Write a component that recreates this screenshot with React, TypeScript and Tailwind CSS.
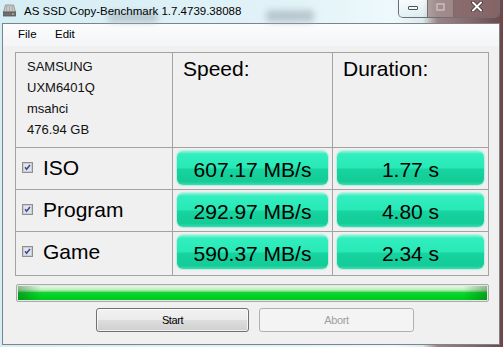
import React from "react";

const sans = { fontFamily: '"Liberation Sans", Arial, sans-serif' };

function Check() {
  return (
    <svg width="11" height="11" viewBox="0 0 11 11">
      <rect x="0.5" y="0.5" width="10" height="10" fill="#f4f4f4" stroke="#8e8f8f" />
      <rect x="1.5" y="1.5" width="8" height="8" fill="#e2e4e8" stroke="#c9ccd2" />
      <path d="M3 5.3 L4.6 7.2 L8 3" fill="none" stroke="#3d4f94" strokeWidth="1.6" />
    </svg>
  );
}

function DriveIcon() {
  return (
    <svg width="13" height="13" viewBox="0 0 13 13">
      <path d="M2.5 1 L10.5 1 L12.5 8 L0.5 8 Z" fill="#c9c9c9" stroke="#8a8a8a" strokeWidth="0.8" />
      <path d="M4 2 L3.3 7.5 M6.5 2 L6.5 7.5 M9 2 L9.7 7.5" stroke="#a5a5a5" strokeWidth="0.8" />
      <rect x="0.5" y="8" width="12" height="4" fill="#6e6e6e" stroke="#555" strokeWidth="0.8" />
      <rect x="9" y="9.5" width="2" height="1" fill="#c8c8c8" />
    </svg>
  );
}

function GreenBox({ text }: { text: string }) {
  return (
    <div className="h-[34px] w-full rounded-[6px] shadow-[0_0_1px_1px_rgba(120,230,200,0.45)] bg-[linear-gradient(to_bottom,#8af7dc_0%,#33eebf_9%,#27e9b6_50%,#17d39f_53%,#13cc98_90%,#3fdcb2_100%)] flex items-center justify-center pt-[2px] text-[21px] text-black leading-none">
      {text}
    </div>
  );
}

function LabelCell({ label }: { label: string }) {
  return (
    <div className="bg-[#f0f0f0] flex items-start">
      <div className="h-[38px] flex items-center pl-[6px] gap-[10px]">
        <Check />
        <span className="text-[21px] leading-none text-black">{label}</span>
      </div>
    </div>
  );
}

function ValueCell({ text }: { text: string }) {
  return (
    <div className="bg-[#f0f0f0] px-[4px] pt-[3px]">
      <GreenBox text={text} />
    </div>
  );
}

export default function App() {
  const rows = [
    { label: "ISO", speed: "607.17 MB/s", dur: "1.77 s" },
    { label: "Program", speed: "292.97 MB/s", dur: "4.80 s" },
    { label: "Game", speed: "590.37 MB/s", dur: "2.34 s" },
  ];
  return (
    <div
      className="w-[503px] h-[347px] overflow-hidden relative flex flex-col bg-[linear-gradient(to_right,#d5edf4_0%,#e2f3f8_60%,#eef9fc_78%,#dcebef_84%,#9a8385_87%,#85666a_94%,#6d4648_100%)]"
      style={sans}
    >
      {/* blurred background behind glass */}
      <div className="absolute left-[108px] top-[12px] w-[50px] h-[10px] rounded-[4px] bg-[#a8b6be] blur-[3px] opacity-70" />
      <div className="absolute left-[266px] top-[10px] w-[48px] h-[12px] rounded-[4px] bg-[#a8b6be] blur-[3px] opacity-70" />

      {/* title bar */}
      <div className="relative h-[23px] flex items-start shrink-0">
        <div className="pl-[3px] pt-[4px]">
          <DriveIcon />
        </div>
        <div className="ml-[8px] pt-[4px] text-[11.5px] leading-[14px] text-black">
          AS SSD Copy-Benchmark 1.7.4739.38088
        </div>
        <div className="ml-auto mr-[3px] flex h-[18px] border border-t-0 border-[#6d6f73] rounded-b-[5px] overflow-hidden">
          <div className="w-[28px] bg-[linear-gradient(to_bottom,rgba(255,255,255,0.7),rgba(220,235,240,0.5))] flex items-start justify-center pt-[6px]">
            <div className="w-[10px] h-[4px] bg-white border border-[#4c5358] rounded-[1px]" />
          </div>
          <div className="w-[26px] border-l border-[#7a6a6c] bg-[#a4908f]/70 flex items-start justify-center pt-[3px]">
            <div className="w-[9px] h-[8px] border-[2px] border-[#cfc2c2]/70 rounded-[1px]" />
          </div>
          <div className="w-[46px] border-l border-[#7a6a6c] bg-[#8a6a6c]/80 flex items-start justify-center pt-[1px]">
            <svg width="12" height="11" viewBox="0 0 12 11">
              <path d="M2 1.5 L10 9.5 M10 1.5 L2 9.5" stroke="#3a2c2d" strokeWidth="3.4" strokeLinecap="round" />
              <path d="M2 1.5 L10 9.5 M10 1.5 L2 9.5" stroke="#ffffff" strokeWidth="2" strokeLinecap="round" />
            </svg>
          </div>
        </div>
      </div>

      {/* client area */}
      <div className="ml-[2px] w-[498px] h-[322px] border border-[#7d8387] bg-[#f0f0f0] flex flex-col shrink-0">
        {/* menu */}
        <div className="h-[22px] flex items-center pl-[15px] text-[11.5px] text-black bg-[linear-gradient(to_bottom,#fbfcfd,#f3f5f8)] shrink-0">
          <span className="w-[37px]">File</span>
          <span>Edit</span>
        </div>

        {/* table */}
        <div className="mt-[6px] ml-[12px] w-[474px] grid grid-cols-[156px_159px_155px] grid-rows-[94px_41px_41px_43px] gap-px p-px bg-[#a3a3a3]">
          <div className="bg-[#f0f0f0] pl-[11px] pt-[3px] text-[13px] leading-[21px] text-[#111]">
            <div>SAMSUNG</div>
            <div>UXM6401Q</div>
            <div>msahci</div>
            <div>476.94 GB</div>
          </div>
          <div className="bg-[#f0f0f0] pl-[10px] pt-[4px] text-[21px] leading-[24px] text-black">Speed:</div>
          <div className="bg-[#f0f0f0] pl-[10px] pt-[4px] text-[21px] leading-[24px] text-black">Duration:</div>
          {rows.map((r) => (
            <React.Fragment key={r.label}>
              <LabelCell label={r.label} />
              <ValueCell text={r.speed} />
              <ValueCell text={r.dur} />
            </React.Fragment>
          ))}
        </div>

        {/* progress bar */}
        <div className="mt-[8px] ml-[13px] w-[473px] h-[18px] border border-[#a8aca9] rounded-[2px] p-px bg-[#e6e6e6]">
          <div className="w-full h-full bg-[linear-gradient(to_right,rgba(0,70,0,0.35)_0%,rgba(0,70,0,0)_5%,rgba(0,70,0,0)_95%,rgba(0,70,0,0.35)_100%),linear-gradient(to_bottom,#e6f8e6_0%,#bff1bf_25%,#7fe58a_38%,#14d436_45%,#02d224_70%,#00c81e_100%)]" />
        </div>

        {/* buttons */}
        <div className="mt-[6px] ml-[93px] flex gap-[10px]">
          <div className="w-[153px] h-[24px] border border-[#707070] rounded-[3px] bg-[linear-gradient(to_bottom,#f2f2f2_0%,#ebebeb_48%,#dddddd_52%,#cfcfcf_100%)] flex items-center justify-center text-[11px] tracking-[-0.4px] text-black shadow-[inset_0_0_0_1px_rgba(255,255,255,0.7)]">
            Start
          </div>
          <div className="w-[155px] h-[24px] border border-[#adb2b5] rounded-[3px] bg-[#f4f4f4] flex items-center justify-center text-[11px] tracking-[-0.4px] text-[#a0a0a0]">
            Abort
          </div>
        </div>
      </div>
    </div>
  );
}
